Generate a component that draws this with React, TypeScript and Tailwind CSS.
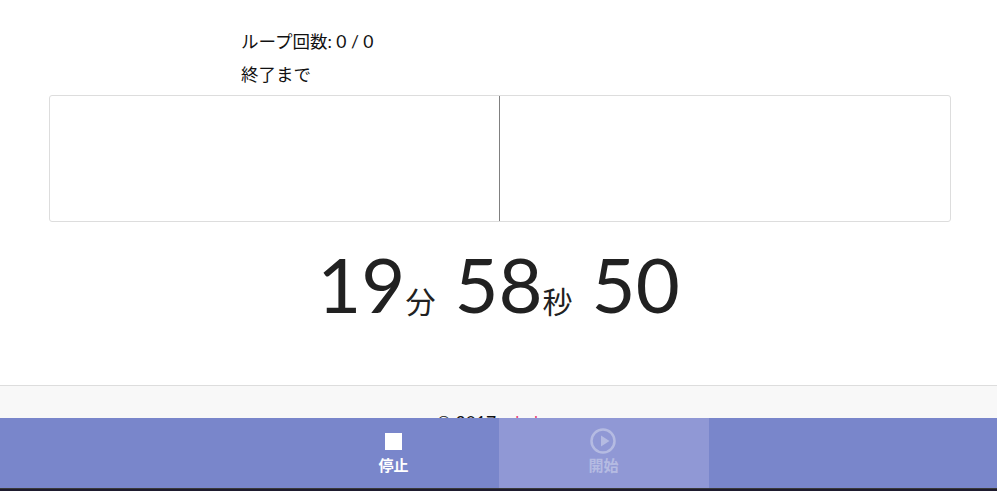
const cjk = "font-['Lato','Noto_Sans_CJK_JP',sans-serif]";

export default function App() {
  return (
    <div className={`relative h-[491px] overflow-hidden bg-white text-[#212121] ${cjk}`}>
      <main className="h-[385px] pt-[25px]">
        <div className="pl-[241px] text-[17.5px] text-[#111]">
          <p className="leading-[33px]">ループ回数: 0 / 0</p>
          <p className="leading-[34px]">終了まで</p>
        </div>
        <div className="ml-[49px] mr-[46px] mt-[3px] flex h-[127px] justify-center rounded-[3px] border border-[#dddddd]">
          <div className="mr-[2px] w-px bg-[#808080]" />
        </div>
        <div className="mt-[12px] flex items-baseline justify-center text-[76px] leading-[100px]">
          <span>19</span>
          <span className="text-[30px]">分</span>
          <span className="ml-[19px]">58</span>
          <span className="text-[30px]">秒</span>
          <span className="ml-[19px]">50</span>
        </div>
      </main>
      <footer className="h-[106px] border-t border-[#dddddd] bg-[#f8f8f8] pt-[25px] text-center text-[17.5px] leading-[24px] text-[#111]">
        © 2017 – <span className="text-[#ec407a]">kubes</span>
      </footer>
      <div className="absolute inset-x-0 bottom-0">
        <div className="flex h-[70px] justify-center bg-[#7986cb] px-[288px] text-[15px] font-bold leading-[20px] text-white">
          <button className="flex w-[210px] flex-col items-center pt-[10px]">
            <span className="flex h-[26px] items-center">
              <span className="h-[17px] w-[17px] bg-white" />
            </span>
            <span className="mt-[1px]">停止</span>
          </button>
          <button className="flex w-[210px] flex-col items-center bg-[#9098d5] pt-[10px] text-[#b5bbe2]">
            <svg width="26" height="26" viewBox="0 0 26 26" fill="none" className="mr-[2px]">
              <circle cx="13" cy="13" r="11.5" stroke="#b5bbe2" strokeWidth="2.5" />
              <path d="M11 7.5 19.5 13 11 18.5z" fill="#b5bbe2" />
            </svg>
            <span className="mt-[1px]">開始</span>
          </button>
        </div>
        <div className="h-[3px] border-t border-[#3a3a3a] bg-[#1e1b2e]" />
      </div>
    </div>
  );
}
